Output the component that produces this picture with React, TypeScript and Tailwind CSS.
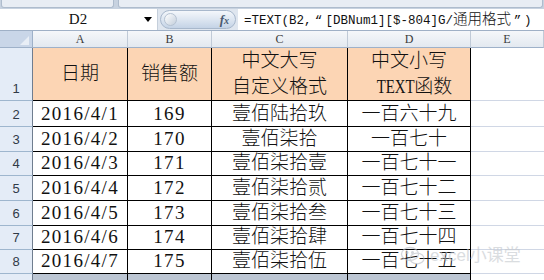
import React from 'react'

const serif = { fontFamily: '"Liberation Serif", "Noto Sans CJK SC", serif' }

const rows = [
  ['2016/4/1', '169', '壹佰陆拾玖', '一百六十九'],
  ['2016/4/2', '170', '壹佰柒拾', '一百七十'],
  ['2016/4/3', '171', '壹佰柒拾壹', '一百七十一'],
  ['2016/4/4', '172', '壹佰柒拾贰', '一百七十二'],
  ['2016/4/5', '173', '壹佰柒拾叁', '一百七十三'],
  ['2016/4/6', '174', '壹佰柒拾肆', '一百七十四'],
  ['2016/4/7', '175', '壹佰柒拾伍', '一百七十五'],
]
const heights = ['h-[26px]', 'h-[25px]', 'h-[24px]', 'h-[25px]', 'h-[25px]', 'h-[24px]', 'h-[24px]']

const rowHead =
  'flex items-end justify-center pb-[2px] bg-[#e4ecf7] border-r border-r-[#6f7d8f] border-b border-b-[#9eb6ce] text-[13px] text-[#303a47] font-["Liberation_Sans",sans-serif]'
const cell =
  'flex items-end justify-center border-r border-b border-black text-[19px] leading-[22px] text-[#111] pb-[1px]'
const headCell =
  'flex flex-col items-center justify-center border-r border-b border-black bg-[#fcd5b4] text-[19px] leading-[26px] text-[#111] font-light'
const emptyCell = 'border-b border-b-[#d0d7e5]'

function FxButton() {
  return (
    <div className="relative w-[76px] h-[19px] rounded-full border border-[#a8b8cc] bg-gradient-to-b from-[#f4f7fb] via-[#dde6f1] to-[#c4d3e6] flex items-center justify-end pr-[6px]">
      <div className="absolute left-[3px] top-[2px] w-[13px] h-[13px] rounded-full bg-gradient-to-br from-[#ffffff] to-[#c4cfdc] border border-[#b5c2d2]" />
      <span className="italic font-bold text-[13px] text-[#4a5a70]" style={serif}>
        f<span className="text-[10px]">x</span>
      </span>
    </div>
  )
}

function Watermark() {
  return (
    <div className="absolute left-[400px] top-[243px] flex items-center gap-[4px] opacity-60 pointer-events-none">
      <svg width="26" height="20" viewBox="0 0 26 20" fill="none" stroke="#b9bec6" strokeWidth="1.3">
        <ellipse cx="10" cy="8" rx="8.5" ry="6.5" />
        <ellipse cx="17" cy="12.5" rx="7" ry="5.3" />
        <circle cx="7" cy="6.5" r="0.9" fill="#b9bec6" />
        <circle cx="12.5" cy="6.5" r="0.9" fill="#b9bec6" />
      </svg>
      <span className="text-[17px] text-[#c3c7cd] font-['Liberation_Sans','Noto_Sans_CJK_SC',sans-serif]">
        excel小课堂
      </span>
    </div>
  )
}

export default function App() {
  return (
    <div className="relative w-[544px] h-[280px] overflow-hidden bg-white">
      {/* ribbon strip */}
      <div className="h-[9px] bg-[#c7d2e0] flex gap-[4px] px-[1px]">
        <div className="w-[113px] h-[8px] rounded-b-[3px] bg-[#e8edf4] border border-t-0 border-[#aebccd]" />
        <div className="flex-1 h-[8px] rounded-b-[3px] bg-[#e8edf4] border border-t-0 border-[#aebccd]" />
      </div>

      {/* formula bar */}
      <div className="h-[22px] flex items-center bg-[#dfe6ef] border-b border-[#9fb0c6]">
        <div className="w-[158px] h-[21px] bg-white border-r border-[#c5cfdb] flex items-center">
          <span className="flex-1 text-center text-[15px] text-[#111] pl-[12px]" style={serif}>D2</span>
          <span className="w-0 h-0 border-l-[4px] border-r-[4px] border-t-[5px] border-l-transparent border-r-transparent border-t-black mr-[5px]" />
        </div>
        <div className="px-[2px]">
          <FxButton />
        </div>
        <div className="flex-1 h-[21px] bg-white flex items-center pl-[6px]">
          <span className="text-[12.5px] leading-[18px] text-[#111] font-['Liberation_Mono',monospace] whitespace-nowrap">
            =TEXT(B2,<span className="inline-block w-[14px] text-center">“</span>[DBNum1][$-804]G/
            <span className="text-[14.5px] font-['Noto_Sans_CJK_SC',sans-serif] font-light">通用格式</span>
            <span className="inline-block w-[13px] text-center">”</span>)
          </span>
        </div>
      </div>

      {/* sheet */}
      <div className="grid grid-cols-[33px_95px_84px_136px_123px_73px]">
        {/* column headers */}
        <div className="h-[17px] bg-[#c9d6e8] border-r border-b border-[#9eb1c9] flex items-end justify-end pr-[3px] pb-[2px]">
          <svg width="9" height="9" viewBox="0 0 9 9">
            <path d="M9 0 L9 9 L0 9 Z" fill="#e8eef6" />
          </svg>
        </div>
        {['A', 'B', 'C', 'D', 'E'].map((c) => (
          <div
            key={c}
            className="h-[17px] bg-gradient-to-b from-[#f5f7fa] to-[#e3e9f0] border-r border-r-[#c0cad7] border-b border-b-[#9eb1c9] flex items-center justify-center text-[12px] text-[#3b3b3b]"
            style={serif}
          >
            {c}
          </div>
        ))}

        {/* header row 1 */}
        <div className={`${rowHead} h-[53px]`}>1</div>
        <div className={headCell} style={serif}>日期</div>
        <div className={headCell} style={serif}>销售额</div>
        <div className={headCell} style={serif}>
          <span>中文大写</span>
          <span>自定义格式</span>
        </div>
        <div className={headCell} style={serif}>
          <span>中文小写</span>
          <span>
            <span className="inline-block scale-x-[0.78] origin-right font-normal">TEXT</span>函数
          </span>
        </div>
        <div className={emptyCell} />

        {rows.map((r, i) => (
          <React.Fragment key={i}>
            <div className={`${rowHead} ${heights[i]}`}>{i + 2}</div>
            <div className={`${cell} tracking-[1.3px]`} style={serif}>{r[0]}</div>
            <div className={`${cell} tracking-[1.3px]`} style={serif}>{r[1]}</div>
            <div className={`${cell} font-light`} style={serif}>{r[2]}</div>
            <div className={`${cell} font-light`} style={serif}>{r[3]}</div>
            <div className={emptyCell} />
          </React.Fragment>
        ))}

        {/* partial row 9 */}
        <div className="h-[8px] bg-[#e4ecf7] border-r border-r-[#6f7d8f]" />
        <div className="h-[8px] bg-[#bcc6d3] border-r border-black" />
        <div className="h-[8px] bg-[#bcc6d3] border-r border-black" />
        <div className="h-[8px] bg-[#bcc6d3] border-r border-black" />
        <div className="h-[8px] bg-[#bcc6d3] border-r border-black" />
        <div className="h-[8px]" />
      </div>

      <Watermark />
    </div>
  )
}
